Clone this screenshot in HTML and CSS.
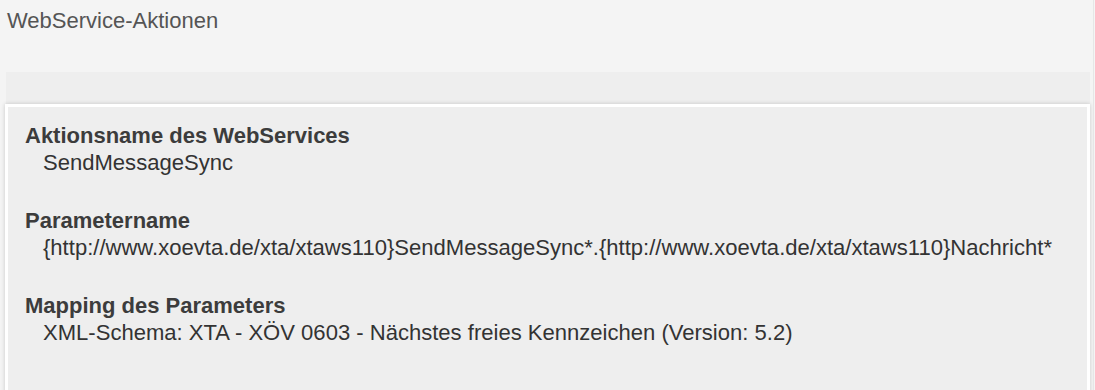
FILE: index.html
```html
<!DOCTYPE html>
<html>
<head>
<meta charset="utf-8">
<link rel="stylesheet" href="styles.css">
</head>
<body>
<div class="page">
  <h1 class="title">WebService-Aktionen</h1>
  <div class="band"></div>
  <div class="panel">
    <dl class="fields">
      <dt>Aktionsname des WebServices</dt>
      <dd>SendMessageSync</dd>
      <dt>Parametername</dt>
      <dd>{http://www.xoevta.de/xta/xtaws110}SendMessageSync*.{http://www.xoevta.de/xta/xtaws110}Nachricht*</dd>
      <dt>Mapping des Parameters</dt>
      <dd>XML-Schema: XTA - XÖV 0603 - Nächstes freies Kennzeichen (Version: 5.2)</dd>
    </dl>
  </div>
</div>
</body>
</html>
```
FILE: styles.css
```css
html, body {
  margin: 0;
  padding: 0;
  background: #f4f4f4;
  font-family: "Liberation Sans", Arial, sans-serif;
  color: #333;
}
.page {
  padding: 0 3px 0 5px;
  height: 390px;
  overflow: hidden;
  border-right: 1px solid #e6e6e6;
  margin-right: 1px;
}
.title {
  margin: 0;
  padding: 8px 0 0 2px;
  height: 72px;
  box-sizing: border-box;
  font-size: 22px;
  font-weight: normal;
  color: #555;
  line-height: 26px;
}
.band {
  margin-left: 1px;
  height: 32px;
  background: #eeeeee;
}
.panel {
  background: #eeeeee;
  border: 3px solid #fff;
  box-shadow: 0 0 4px rgba(0,0,0,0.18);
  padding: 15px 17px 40px 17px;
}
.fields {
  margin: 0;
}
.fields dt {
  font-weight: bold;
  font-size: 22px;
  line-height: 27px;
  color: #3c3c3c;
}
.fields dd {
  margin: 0 0 31px 18px;
  font-size: 22.05px;
  line-height: 27px;
  color: #333;
}
```
